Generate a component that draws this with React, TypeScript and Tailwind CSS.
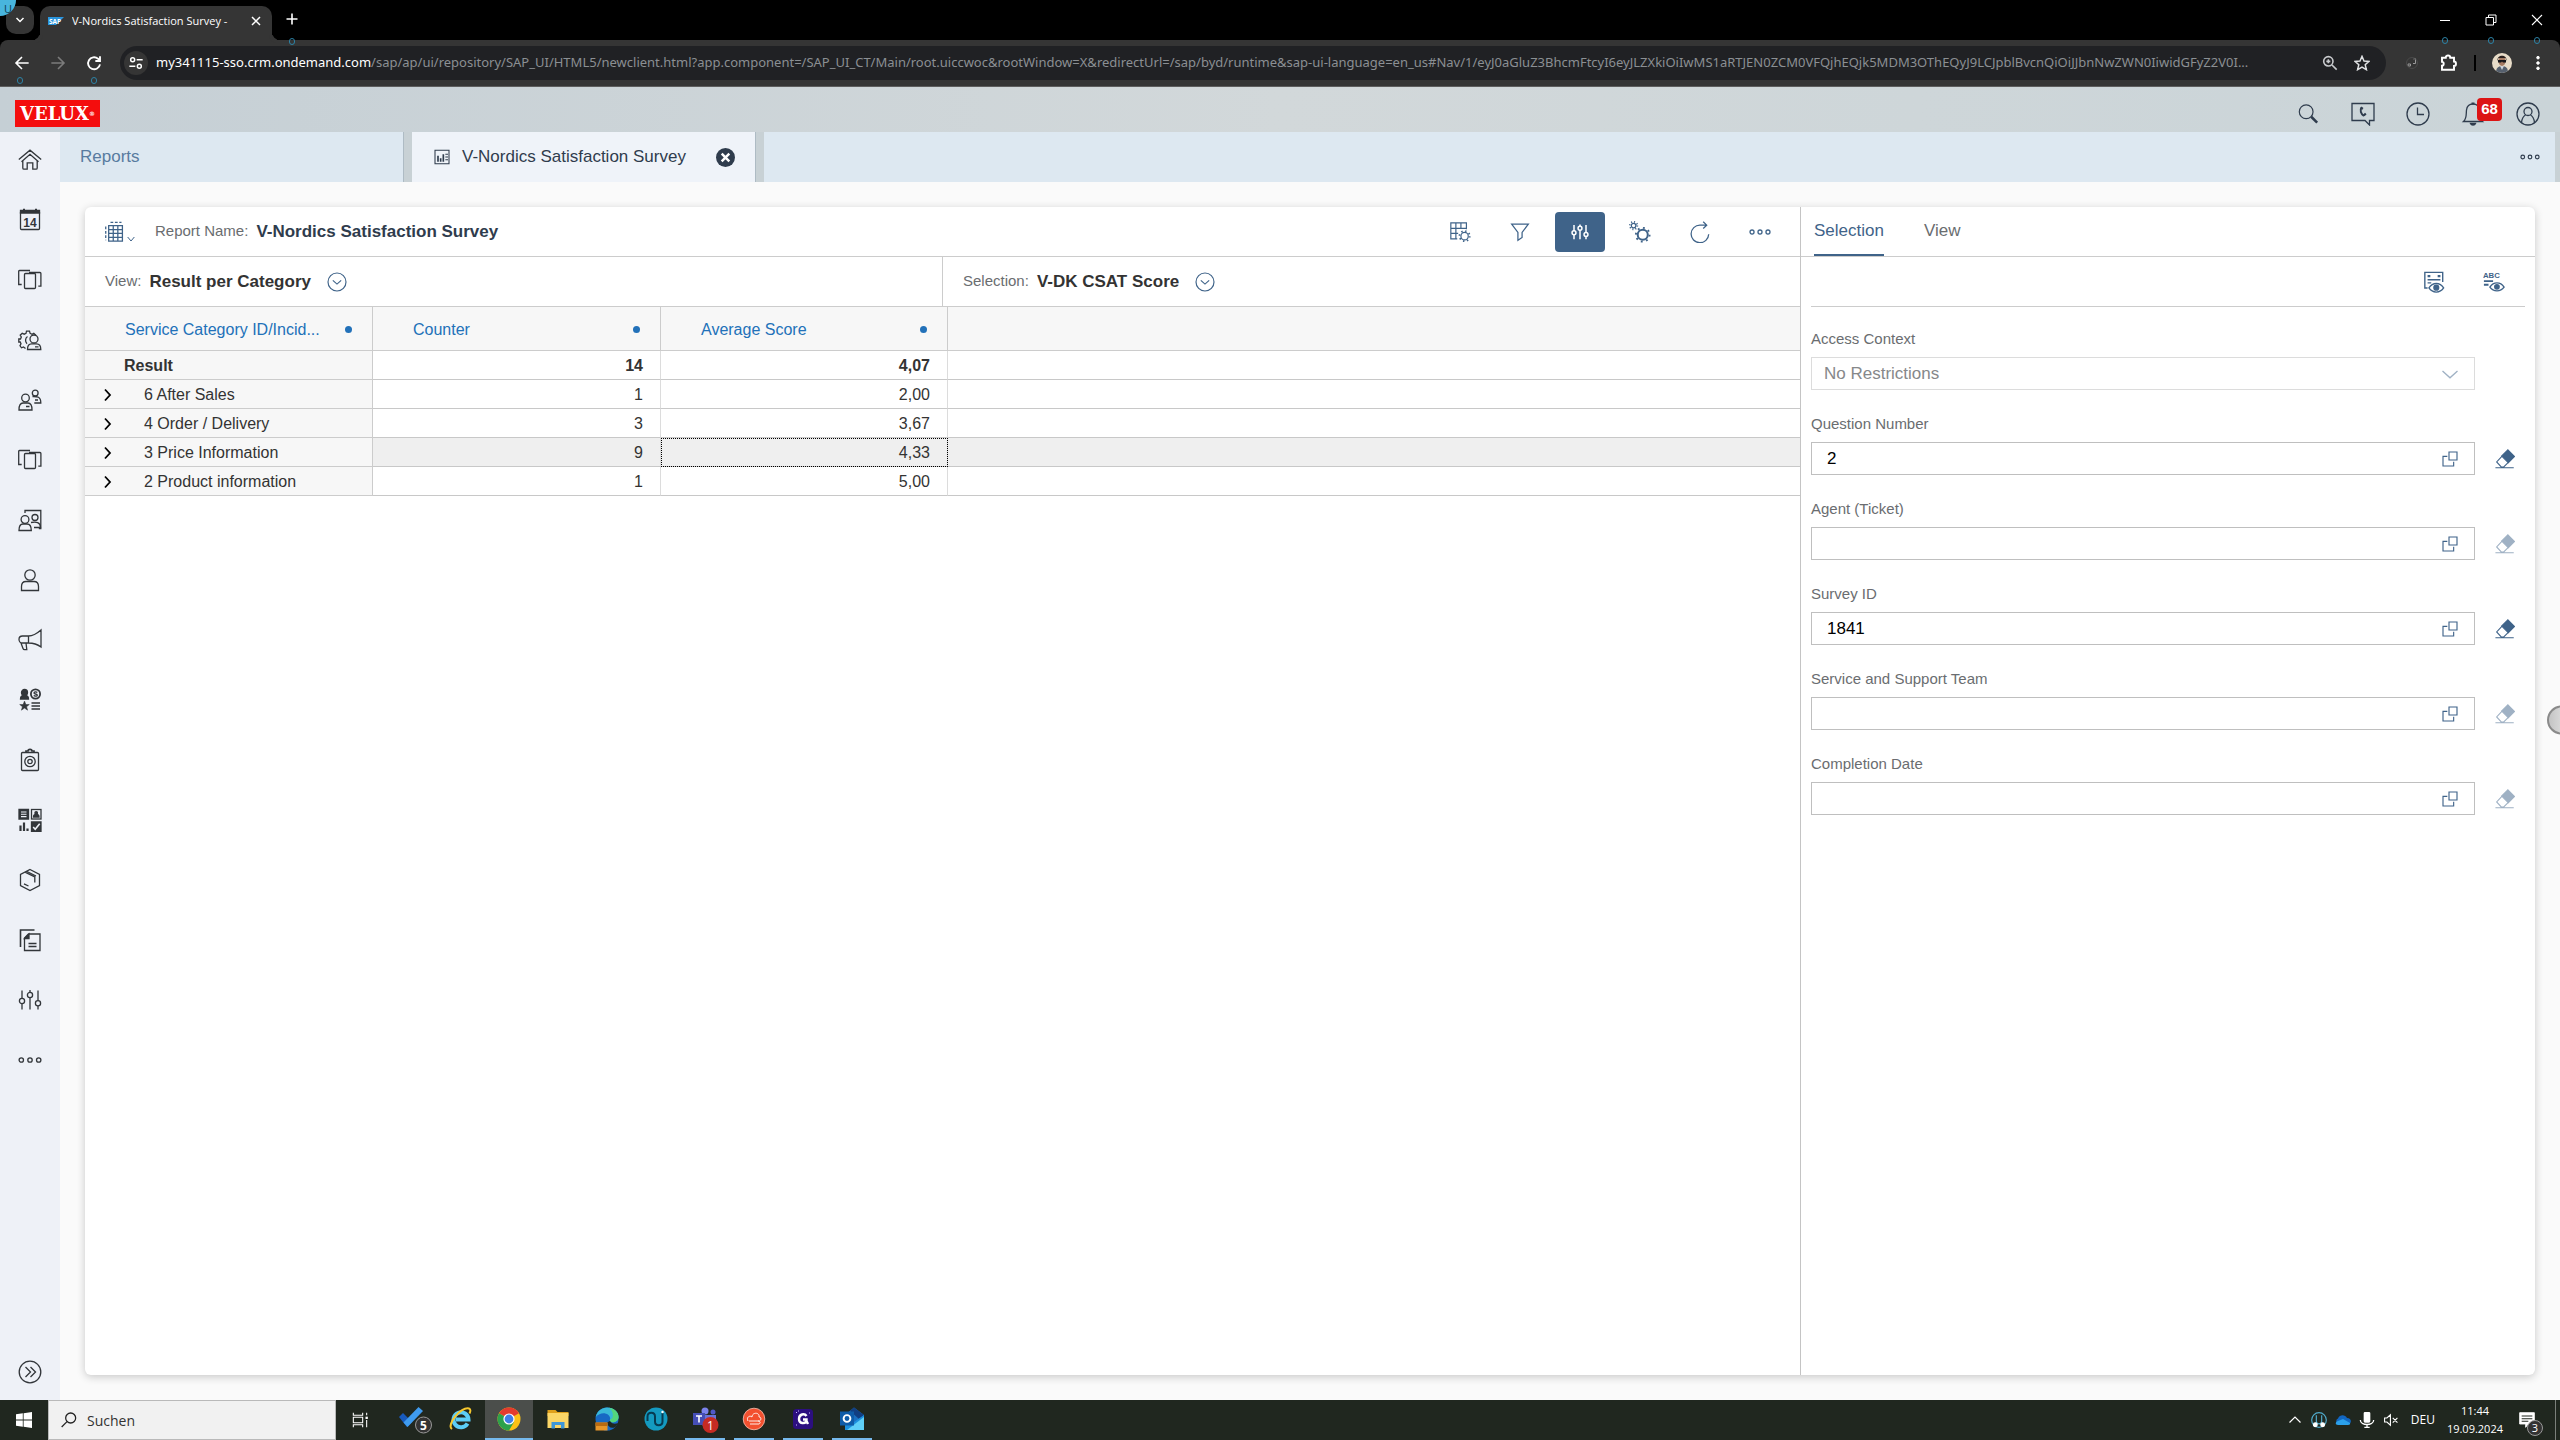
import { useState } from 'react';
import type { ReactNode } from 'react';

const URL_HOST = 'my341115-sso.crm.ondemand.com';
const URL_PATH =
  '/sap/ap/ui/repository/SAP_UI/HTML5/newclient.html?app.component=/SAP_UI_CT/Main/root.uiccwoc&rootWindow=X&redirectUrl=/sap/byd/runtime&sap-ui-language=en_us#Nav/1/eyJ0aGluZ3BhcmFtcyI6eyJLZXkiOiIwMS1aRTJEN0ZCM0VFQjhEQjk5MDM3OThEQyJ9LCJpblBvcnQiOiJJbnNwZWN0IiwidGFyZ2V0I...';

interface ReportRow {
  category: string;
  counter: string;
  score: string;
}

const rows: ReportRow[] = [
  { category: '6 After Sales', counter: '1', score: '2,00' },
  { category: '4 Order / Delivery', counter: '3', score: '3,67' },
  { category: '3 Price Information', counter: '9', score: '4,33' },
  { category: '2 Product information', counter: '1', score: '5,00' },
];

interface Field {
  id: string;
  label: string;
  value: string;
}

const initialFields: Field[] = [
  { id: 'question', label: 'Question Number', value: '2' },
  { id: 'agent', label: 'Agent (Ticket)', value: '' },
  { id: 'survey', label: 'Survey ID', value: '1841' },
  { id: 'team', label: 'Service and Support Team', value: '' },
  { id: 'completion', label: 'Completion Date', value: '' },
];

interface IconProps {
  children: ReactNode;
  className?: string;
  width?: number;
}

function Icon({ children, className = 'size-6', width = 1.3 }: IconProps) {
  return (
    <svg viewBox="0 0 24 24" className={className} fill="none" stroke="currentColor" strokeWidth={width} aria-hidden="true">
      {children}
    </svg>
  );
}

function Gear({ cx, cy, r, w = 1.3 }: { cx: number; cy: number; r: number; w?: number }) {
  // eight teeth drawn as a dashed ring around the hub
  const outer = r + w / 2 + 0.9;
  const step = (2 * Math.PI * outer) / 8;
  return (
    <g>
      <circle cx={cx} cy={cy} r={r} strokeWidth={w} />
      <circle cx={cx} cy={cy} r={outer} strokeWidth={2} strokeDasharray={`${step * 0.35} ${step * 0.65}`} />
    </g>
  );
}

const pagesIcon = (
  <>
    <rect x="6.5" y="5.5" width="11" height="15" rx="1" />
    <path d="M12 2.5H1.5c-.5 0-.8.3-.8.8v13.2h3M11 4.5h11c.6 0 .9.3.9.9v12.8h-2.6" />
  </>
);

const slidersIcon = (
  <>
    <path d="M4 2.5v8M4 15.5v6M12 2v2.500M12 9.500v12M20 2.500v10M20 18v3.500" />
    <circle cx="4" cy="13" r="2.6" />
    <circle cx="12" cy="7" r="2.6" />
    <circle cx="20" cy="15.2" r="2.6" />
  </>
);

const dotsIcon = (
  <>
    <circle cx="3.300" cy="12" r="2.200" />
    <circle cx="12" cy="12" r="2.200" />
    <circle cx="20.700" cy="12" r="2.200" />
  </>
);

const navItems: { label: string; icon: ReactNode }[] = [
  {
    label: 'Home',
    icon: <path d="M.8 11.500 12 2.200l11.200 9.300M3.500 13.800 12 6.300l8.500 7.500M4.800 12.800V20c0 .8.300 1.200 1.200 1.200h3.200v-6.400h5.600v6.400H18c.8 0 1.200-.4 1.200-1.200v-7.200" />,
  },
  {
    label: 'Calendar',
    icon: (
      <>
        <rect x="2.500" y="3" width="19" height="18.500" rx="1" />
        <path d="M2.500 2.500h19v2.500h-19z" fill="currentColor" />
        <path d="M6 .8v2.400M18 .8v2.400" strokeWidth="2" />
        <text x="12" y="18.500" textAnchor="middle" fontSize="12" fontWeight="bold" fill="currentColor" stroke="none">14</text>
      </>
    ),
  },
  { label: 'Pages', icon: pagesIcon },
  {
    label: 'Service agents',
    icon: (
      <>
        <path d="M7.500 20.500l-2-1.500-2 .8-1.500-2 1-2-.8-1.800H.8v-3h1.700l.8-2-1.100-1.800 2-2 2 1 1.800-.8.500-2.200h3l.6 2.200 1.900.9 1.800-1.100 2 2M9.500 8.500C7 10 7 14 9 15.800" />
        <circle cx="16" cy="11" r="4" />
        <path d="M9.500 21.500c0-4 1.500-5.700 4-5.700h5c2.700 0 4.300 1.800 4.300 5.700zM17 18.800h3.500" />
      </>
    ),
  },
  {
    label: 'Accounts',
    icon: (
      <>
        <circle cx="7.500" cy="10" r="3.800" />
        <path d="M1 22c0-4.700 1.200-7 4-7h5c2.800 0 4 2.300 4 7zM8 18.500h3.500" />
        <circle cx="17.200" cy="5" r="2.900" />
        <path d="M14.500 8.500c4 0 8.300-.5 8.300 6.500h-6.500M17 12h3" />
      </>
    ),
  },
  { label: 'Documents', icon: pagesIcon },
  {
    label: 'Contacts',
    icon: (
      <>
        <circle cx="7" cy="11.500" r="3.900" />
        <path d="M1 22.500c0-4.500 1.500-6.500 4-6.500h4c2.700 0 4.300 2 4.300 6.500zM7 5V2.500h15.800v18h-2" />
        <circle cx="17" cy="9.500" r="3" />
        <path d="M13 14.500c5-1 9.500-.5 9.500 5h-6.500" />
      </>
    ),
  },
  {
    label: 'People',
    icon: (
      <>
        <circle cx="12" cy="7" r="5.200" />
        <path d="M3.500 22.500v-4c0-3.500 1.500-5 4.500-5h8c3 0 4.500 1.500 4.500 5v4z" />
      </>
    ),
  },
  {
    label: 'Campaigns',
    icon: <path d="M23 2v17c-4-3-7.500-4-12.500-4H4.500C2.500 15 1 13.500 1 11.500S2.500 8 4.500 8h6C15.500 8 19 5.500 23 2zM10.500 8v7M3 15l2 5.500c.3.900.8 1.200 1.600 1.200h2.200L8 15" />,
  },
  {
    label: 'Sales',
    icon: (
      <>
        <circle cx="6.500" cy="4.500" r="3" fill="currentColor" />
        <path d="M2.500 11c0-2.500 1.500-3.500 4-3.500s4 1 4 3.500z" fill="currentColor" />
        <circle cx="17.500" cy="6" r="4.600" strokeWidth="1.800" />
        <path d="M19.300 4.500c-.8-.8-3.300-.8-3.300.4 0 1.400 3.300.8 3.300 2.300 0 1.200-2.600 1.200-3.600.3" />
        <path d="m6.500 13 1.400 3.500h3.400l-2.700 2.200 1 3.500-3.100-2.100-3.100 2.100 1-3.500-2.700-2.200h3.400z" fill="currentColor" strokeWidth=".5" />
        <path d="M13.500 15h8.500M13.500 18h8.500M13.500 21h8.500" strokeWidth="1.500" />
      </>
    ),
  },
  {
    label: 'Targets',
    icon: (
      <>
        <rect x="3.500" y="4.500" width="17" height="18" rx="1" />
        <path d="M8 4.500V3h2c0-2.200 4-2.200 4 0h2v1.500" strokeWidth="1.700" />
        <circle cx="12" cy="13.500" r="5.200" />
        <circle cx="12" cy="13.500" r="2.200" />
      </>
    ),
  },
  {
    label: 'Tasks',
    icon: (
      <>
        <path d="M1 1.500h9.500v9.500H1z" fill="currentColor" />
        <path d="M3 4h5.500M3 6.300h5.500M3 8.600h5.500" stroke="#eef1f7" strokeWidth="1.100" />
        <rect x="13.500" y="1.500" width="9.500" height="9.500" />
        <path d="M15.500 9c0-2 1-2.500 2.800-2.500S21 7 21 9z" fill="currentColor" />
        <circle cx="18.200" cy="5" r="1.300" fill="currentColor" />
        <path d="M2.500 23v-5.500M6 23v-8.500M9.500 23v-2.500" strokeWidth="2.200" />
        <path d="M13.500 14h9.500v9.500h-9.500z" fill="currentColor" />
        <path d="m15.200 19 2 2.200 4.500-5.500" stroke="#eef1f7" strokeWidth="1.600" />
      </>
    ),
  },
  {
    label: 'Products',
    icon: <path d="m12 1.500 9.500 4.800v11.400L12 22.500l-9.500-4.800V6.300zM7.500 4.300 16.800 9v5.500M6 15.800l4.500 2.200M9 3.500 18 8" />,
  },
  {
    label: 'Library',
    icon: (
      <>
        <path d="M2.500 19V2h14" strokeWidth="1.600" />
        <path d="M10.500 6h11.500v16.500H6.500V10z" />
        <path d="M6.500 10.500h4.500V6z" fill="currentColor" />
        <path d="M10.500 15.500h8M10.500 18.500h8" />
      </>
    ),
  },
  { label: 'Settings', icon: slidersIcon },
  { label: 'More', icon: dotsIcon },
];

function Hint({ className }: { className: string }) {
  return <span className={`absolute z-10 h-[7px] w-[6px] rounded-full border border-[#2d82a5] ${className}`} />;
}

function BrowserChrome() {
  return (
    <div className="relative bg-black font-['Open_Sans',sans-serif] text-white">
      <div className="absolute left-0 top-0 z-10 flex size-4 items-center justify-center rounded-br-full bg-[#48b5dd] text-[11px] leading-none text-[#0d3c52]">U</div>
      <div className="flex h-10 items-end">
        <button aria-label="Search tabs" className="mb-[6px] ml-[6px] flex h-7 w-7 items-center justify-center rounded-[10px] bg-[#353535]">
          <Icon className="size-3" width={3}><path d="m5 8 7 7 7-7" /></Icon>
        </button>
        <div className="relative ml-[6px] flex h-[34px] w-[232px] items-center rounded-t-[10px] bg-[#353535] pb-1 pl-2">
          <span className="absolute -left-2 bottom-0 size-2 rounded-br-lg shadow-[3px_3px_0_#353535]" />
          <span className="absolute -right-2 bottom-0 size-2 rounded-bl-lg shadow-[-3px_3px_0_#353535]" />
          <svg viewBox="0 0 16 8" className="h-2 w-4" aria-hidden="true">
            <path d="M0 0h16L8 8H0z" fill="#2a94dc" />
            <text x="1" y="6.500" fontSize="6.500" fontWeight="bold" fill="#fff">SAP</text>
          </svg>
          <span className="ml-2 flex-1 truncate text-[11px]">V-Nordics Satisfaction Survey -</span>
          <button aria-label="Close tab" className="mr-2 flex size-4 items-center justify-center">
            <Icon className="size-3" width={3}><path d="m4 4 16 16M20 4 4 20" /></Icon>
          </button>
        </div>
        <button aria-label="New tab" className="mb-[13px] ml-3 flex size-4 items-center justify-center">
          <Icon className="size-3" width={3.2}><path d="M12 1v22M1 12h22" /></Icon>
        </button>
        <div className="ml-auto flex h-10 items-center">
          <button aria-label="Minimize" className="flex w-[46px] justify-center">
            <Icon className="size-3" width={2}><path d="M2 13h20" /></Icon>
          </button>
          <button aria-label="Restore" className="flex w-[46px] justify-center">
            <Icon className="size-3" width={2}><path d="M2 7h15v15H2zM7 7V2h15v15h-5" /></Icon>
          </button>
          <button aria-label="Close window" className="flex w-[46px] justify-center">
            <Icon className="size-3" width={2.200}><path d="m2 2 20 20M22 2 2 22" /></Icon>
          </button>
        </div>
      </div>
      <div className="flex h-[47px] items-center rounded-t-lg border-b border-[#5d5d5d] bg-[#353535] px-1">
        <button aria-label="Back" className="flex w-9 justify-center">
          <Icon className="size-4" width={2.400}><path d="M22 12H4M12 3l-9 9 9 9" /></Icon>
        </button>
        <button aria-label="Forward" className="flex w-9 justify-center text-[#7b7b7b]">
          <Icon className="size-4" width={2.400}><path d="M2 12h18M12 3l9 9-9 9" /></Icon>
        </button>
        <button aria-label="Reload" className="flex w-9 justify-center">
          <Icon className="size-4" width={2.800}><path d="M21 14a9 9 0 1 1-3-8.500l2.500 2.500M21 2v7h-7" /></Icon>
        </button>
        <div className="ml-2 flex h-[34px] min-w-0 flex-1 items-center rounded-full bg-[#202124] pl-1 pr-2">
          <button aria-label="Site information" className="flex size-6 shrink-0 items-center justify-center rounded-full bg-[#353535]">
            <Icon className="size-4" width={2.200}>
              <circle cx="7" cy="7" r="3" />
              <path d="M13 7h9M2 17h9" />
              <circle cx="17" cy="17" r="3" />
            </Icon>
          </button>
          <span className="ml-2 min-w-0 flex-1 truncate font-['Noto_Sans',sans-serif] text-[13px] text-[#8b8f93]">
            <span className="text-white">{URL_HOST}</span>
            {URL_PATH}
          </span>
          <button aria-label="Zoom" className="flex w-8 shrink-0 justify-center text-[#c8cacd]">
            <Icon className="size-4" width={2.400}>
              <circle cx="9.500" cy="9.500" r="7" />
              <path d="m15 15 7 7M6.500 9.500h6M9.500 6.500v6" />
            </Icon>
          </button>
          <button aria-label="Bookmark" className="flex w-8 shrink-0 justify-center text-[#e0e2e4]">
            <Icon className="size-4" width={2.200}><path d="m12 2 3 7 7.500.6-5.700 5 1.800 7.400L12 18l-6.600 4 1.800-7.400-5.700-5L9 9z" /></Icon>
          </button>
        </div>
        <div className="ml-2 flex items-center">
          <button aria-label="Extension" className="flex w-9 justify-center text-[#9a9a9a]">
            <Icon className="size-3" width={2}><path d="M4 14h5v4H4zM14 13h5M15 4l4-1v10" /><circle cx="12" cy="12" r="11" stroke="#4a4a4a" /></Icon>
          </button>
          <button aria-label="Extensions" className="flex w-9 justify-center">
            <Icon className="size-[18px]" width={2.600}><path d="M4 5h5c0-4 6-4 6 0h5v5c3.500 0 3.500 6 0 6v5H4v-5.500c3 0 3-5 0-5z" /></Icon>
          </button>
          <span className="mx-2 h-4 w-0.5 bg-black" />
          <button aria-label="Profile" className="flex w-9 justify-center">
            <svg viewBox="0 0 20 20" className="size-5 rounded-full" aria-hidden="true">
              <path d="M0 0h20v20H0z" fill="#e8dcc8" />
              <path d="M4 20c0-5 2-7 6-7s6 2 6 7z" fill="#56606e" />
              <path d="m8 13 2 4 2-4z" fill="#cfd5dc" />
              <ellipse cx="10" cy="8" rx="3.500" ry="5" fill="#a57a61" />
              <path d="M5.500 8C4.500 1 15.500 1 14.500 8l-1-3h-7z" fill="#2b211d" />
              <path d="M6 7h8v2.500h-3l-1-1-1 1H6z" fill="#16161a" />
            </svg>
          </button>
          <button aria-label="Browser menu" className="flex w-9 justify-center">
            <Icon className="size-4"><g fill="currentColor"><circle cx="12" cy="4" r="2" /><circle cx="12" cy="12" r="2" /><circle cx="12" cy="20" r="2" /></g></Icon>
          </button>
        </div>
      </div>
      <Hint className="left-[289px] top-[38px]" />
      <Hint className="left-[17px] top-[77px]" />
      <Hint className="left-[91px] top-[77px]" />
      <Hint className="right-[112px] top-[37px]" />
      <Hint className="right-[66px] top-[37px]" />
      <Hint className="right-[20px] top-[37px]" />
    </div>
  );
}

function ShellHeader() {
  return (
    <header className="flex h-[45px] items-center bg-linear-to-r from-[#c5cfd5] via-[#d2d8da] to-[#cad4d8] pl-[15px] pr-3 text-[#2f3c4d]">
      <a href="#home" className="mt-2 flex h-[27px] w-[85px] items-center justify-center bg-[#f40d0d] font-['DejaVu_Serif',serif] text-[18px] font-bold leading-none text-white">
        VELUX<span className="text-[6px]">®</span>
      </a>
      <div className="ml-auto flex items-center gap-[15px] pt-2">
        <button aria-label="Search" className="flex w-10 justify-center">
          <Icon className="size-[22px]"><circle cx="10" cy="9.500" r="7.500" /><path d="m15.500 15 6.500 6.500" strokeWidth="2.800" /></Icon>
        </button>
        <button aria-label="Calls" className="flex w-10 justify-center">
          <Icon>
            <path d="M1 1.500h22v17h-4.500v4.500l-4.500-4.500H1z" />
            <path d="M10.500 5.500c-2 2.500-.5 6.500 2.500 8.500" strokeWidth="2" />
            <path d="m9.800 5.500 2 1.500M12.800 13.500l2-2" strokeWidth="2.200" />
          </Icon>
        </button>
        <button aria-label="Recent" className="flex w-10 justify-center">
          <Icon><circle cx="12" cy="12" r="11" /><path d="M11.500 5.500v7H18" /></Icon>
        </button>
        <button aria-label="Notifications" className="relative flex w-10 justify-center">
          <Icon>
            <path d="M2.500 19.500C6 16.500 5 12 5.500 8c.5-4 3-6 6.500-6s6 2 6.500 6c.5 4-.5 8.500 3 11.500z" />
            <path d="M9.500 21.500c.8 2 4.200 2 5 0z" fill="currentColor" />
            <path d="M10.500 1.500h3" strokeWidth="2" />
          </Icon>
          <span className="absolute -top-1 left-6 flex h-[23px] w-[25px] items-center justify-center rounded bg-[#dc1414] text-[15px] font-bold text-white">68</span>
        </button>
        <button aria-label="User" className="flex w-10 justify-center">
          <Icon>
            <circle cx="12" cy="12" r="11" />
            <circle cx="12" cy="9.500" r="4" />
            <path d="M5.500 20.500c.5-4 2-6.500 4-7.500M18.500 20.500c-.5-4-2-6.500-4-7.500" />
          </Icon>
        </button>
      </div>
    </header>
  );
}

function Sidebar() {
  return (
    <nav className="flex w-[60px] flex-col items-center gap-9 bg-[#eef1f7] py-4 text-[#32363a]">
      {navItems.map((item) => (
        <button key={item.label} aria-label={item.label}>
          <Icon>{item.icon}</Icon>
        </button>
      ))}
      <button aria-label="Expand" className="mt-auto">
        <Icon><circle cx="12" cy="12" r="10.800" /><path d="m7.500 7 5 5-5 5M12.500 7l5 5-5 5" /></Icon>
      </button>
    </nav>
  );
}

function TabBar() {
  return (
    <div className="flex h-[50px] gap-2 bg-[#c8d1d5] pr-[5px] text-[17px]">
      <a href="#reports" className="flex w-[344px] items-center border-r border-[#aebbc4] bg-[#dde8f1] pl-5 text-[#587ba0]">
        Reports
      </a>
      <div className="flex w-[344px] items-center border-r border-[#aebbc4] bg-[#eff3f9] px-5 text-[#2f3c4d]">
        <Icon className="ml-[2px] size-4" width={1.600}>
          <path d="M1.500 2h21v20h-21z" />
          <path d="M6 19v-9M10 19v-5M14 19V8" strokeWidth="2.500" />
          <path d="M17 8h4M17 12h4M17 16h4" />
        </Icon>
        <span className="ml-3">V-Nordics Satisfaction Survey</span>
        <button aria-label="Close V-Nordics Satisfaction Survey" className="ml-auto">
          <svg viewBox="0 0 20 20" className="size-[19px]" aria-hidden="true">
            <circle cx="10" cy="10" r="10" fill="#2f3c4d" />
            <path d="m6 6 8 8M14 6l-8 8" stroke="#fff" strokeWidth="2.600" />
          </svg>
        </button>
      </div>
      <div className="flex flex-1 items-center justify-end bg-[#dde8f1] pr-[15px] text-[#2f3c4d]">
        <button aria-label="More tabs">
          <Icon className="size-5" width={1.400}>{dotsIcon}</Icon>
        </button>
      </div>
    </div>
  );
}

function CircleDown() {
  return (
    <Icon className="size-5" width={1.400}><circle cx="12" cy="12" r="10.800" /><path d="m7 10 5 4.500 5-4.500" /></Icon>
  );
}

function ReportToolbar() {
  return (
    <div className="flex h-[50px] items-center border-b border-[#cccccc] pl-5 pr-[15px] text-[#3f6389]">
      <button aria-label="Table layout" className="flex items-end">
        <Icon className="size-[22px]" width={1.400}>
          <path d="M4 5h15v17H4zM4 9.300h15M4 13.500h15M4 17.800h15M9 5v17M14 5v17" />
          <path d="M6 1.500h12M.8 6v15" strokeDasharray="3 1.800" />
        </Icon>
        <Icon className="size-2" width={3}><path d="m2 6 10 12L22 6" /></Icon>
      </button>
      <span className="ml-5 text-[15px] text-[#6a6d70]">Report Name:</span>
      <h1 className="ml-2 text-[17px] font-bold text-[#2f3c4d]">V-Nordics Satisfaction Survey</h1>
      <div className="ml-auto flex gap-[10px]">
        <button aria-label="Table settings" className="flex h-10 w-[50px] items-center justify-center">
          <Icon className="size-[22px]">
            <path d="M19 9V2H2v17.500h7M2 8h17M2 13.500h8M7.500 2v17.500M13 2v6" />
            <Gear cx={17} cy={16.500} r={4} />
          </Icon>
        </button>
        <button aria-label="Filter" className="flex h-10 w-[50px] items-center justify-center">
          <Icon className="size-5" width={1.500}><path d="M2 2.500h20l-7.500 10v6L9.500 22v-9.500z" /></Icon>
        </button>
        <button aria-label="Selection settings" className="flex h-10 w-[50px] items-center justify-center rounded bg-[#3f6389] text-white">
          <Icon className="size-[18px]" width={2}>{slidersIcon}</Icon>
        </button>
        <button aria-label="Process settings" className="flex h-10 w-[50px] items-center justify-center">
          <Icon className="size-[22px]">
            <Gear cx={5} cy={5} r={2.500} />
            <Gear cx={15} cy={15} r={5.500} w={2.200} />
          </Icon>
        </button>
        <button aria-label="Refresh" className="flex h-10 w-[50px] items-center justify-center">
          <Icon className="size-[22px]" width={1.400}><path d="M21.500 14.500A9.600 9.600 0 1 1 12 4.500h7M15.500.800 19.300 4.500l-3.800 3.700" /></Icon>
        </button>
        <button aria-label="More actions" className="flex h-10 w-[50px] items-center justify-center">
          <Icon className="size-[22px]" width={1.400}>{dotsIcon}</Icon>
        </button>
      </div>
    </div>
  );
}

function ColumnHeader({ title }: { title: string }) {
  return (
    <th className="border-b border-r border-[#cccccc] bg-[#f7f7f7] pl-10 pr-5 pt-0.5 font-normal">
      <div className="flex items-center justify-between">
        <span className="whitespace-nowrap">{title}</span>
        <span className="size-[7px] rounded-full bg-[#2271b9]" />
      </div>
    </th>
  );
}

function ReportTable() {
  const cell = 'border-b border-r border-b-[#c8c8c8] border-r-[#dcdcdc] pr-[17px] pt-0.5 text-right';
  return (
    <table className="w-full table-fixed border-separate border-spacing-0 text-[16px] text-[#333333]">
      <colgroup>
        <col className="w-[288px]" />
        <col className="w-[288px]" />
        <col className="w-[287px]" />
        <col />
      </colgroup>
      <thead>
        <tr className="h-11 text-left text-[#2271b9]">
          <ColumnHeader title="Service Category ID/Incid..." />
          <ColumnHeader title="Counter" />
          <ColumnHeader title="Average Score" />
          <th className="border-b border-[#cccccc] bg-[#f7f7f7]" />
        </tr>
      </thead>
      <tbody>
        <tr className="h-[29px] font-bold">
          <td className="border-b border-r border-[#cccccc] bg-[#f7f7f7] pl-[39px] pt-0.5">Result</td>
          <td className={cell}>14</td>
          <td className={cell}>4,07</td>
          <td className="border-b border-[#c8c8c8]" />
        </tr>
        {rows.map((row) => {
          const active = row.category === '3 Price Information';
          return (
            <tr key={row.category} className={active ? 'h-[29px] bg-[#efefef]' : 'h-[29px]'}>
              <td className="border-b border-r border-[#cccccc] bg-[#f7f7f7] pl-[17px] pt-0.5">
                <div className="flex items-center">
                  <button aria-label={`Expand ${row.category}`} className="text-black">
                    <Icon className="h-[14px] w-[12px]" width={3.600}><path d="m6 1 10 11L6 23" /></Icon>
                  </button>
                  <span className="ml-[30px]">{row.category}</span>
                </div>
              </td>
              <td className={cell}>{row.counter}</td>
              <td className={active ? `${cell} outline-1 -outline-offset-1 outline-dotted outline-black` : cell}>{row.score}</td>
              <td className="border-b border-[#c8c8c8]" />
            </tr>
          );
        })}
      </tbody>
    </table>
  );
}

function SelectionPanel() {
  const [fields, setFields] = useState(initialFields);

  const update = (id: string, value: string) => {
    setFields(fields.map((f) => (f.id === id ? { ...f, value } : f)));
  };

  return (
    <aside className="w-[30%] border-l border-[#c4c4c4]">
      <div className="flex h-[50px] gap-10 border-b border-[#cccccc] px-[13px] text-[17px]">
        <button className="border-b-2 border-[#3f6389] text-[#3f6389]">Selection</button>
        <button className="border-b-2 border-transparent text-[#6a6d70]">View</button>
      </div>
      <div className="px-[10px]">
        <div className="flex h-[50px] items-center justify-end gap-[38px] border-b border-[#cccccc] pr-5 text-[#3f6389]">
          <button aria-label="Show fields">
            <Icon className="size-[22px]" width={1.500}>
              <path d="M5 18.500H2V1.500h19.500V12M5 9.500h14M5 13h4" />
              <path d="M5 5.500h3M16 5.500h3" strokeWidth="2.400" />
              <path d="M6.500 18.500c4-6.500 12-6.500 16 0-4 6-12 6-16 0z" />
              <circle cx="14.500" cy="18.200" r="2.600" fill="currentColor" />
            </Icon>
          </button>
          <button aria-label="Show texts">
            <Icon className="size-[22px]" width={1.500}>
              <text x="0" y="7.500" fontSize="8.500" fontWeight="bold" fill="currentColor" stroke="none">ABC</text>
              <path d="M1 11h10M1 15h5" strokeWidth="2" />
              <path d="M7.500 17.500c4-6 11.500-6 15.500 0-4 5.500-11.500 5.500-15.500 0z" />
              <circle cx="15.200" cy="17.300" r="2.400" fill="currentColor" />
            </Icon>
          </button>
        </div>
        <div className="flex flex-col gap-6 pt-[22px]">
          <div>
            <label htmlFor="context" className="block text-[15px] leading-5 text-[#6a6d70]">Access Context</label>
            <div className="relative mr-[50px] mt-2">
              <select id="context" disabled className="block h-[33px] w-full appearance-none border border-[#dcdcdc] bg-white px-3 text-[17px] text-[#86888a] opacity-100">
                <option>No Restrictions</option>
              </select>
              <Icon className="pointer-events-none absolute right-4 top-2 size-[18px] text-[#9fb1c4]" width={1.800}><path d="m2 8 10 9L22 8" /></Icon>
            </div>
          </div>
          {fields.map((field) => (
            <div key={field.id}>
              <label htmlFor={field.id} className="block text-[15px] leading-5 text-[#6a6d70]">{field.label}</label>
              <div className="mt-2 flex items-center">
                <div className="flex h-[33px] flex-1 items-center border border-[#bfbfbf] bg-white pr-4">
                  <input id={field.id} value={field.value} onChange={(e) => update(field.id, e.target.value)} className="h-full min-w-0 flex-1 px-[15px] text-[17px] text-black outline-none" />
                  <button aria-label={`Choose ${field.label}`} className="text-[#3f6389]">
                    <Icon className="size-4" width={1.700}>
                      <path d="M10.500 1.500h12v12h-12z" />
                      <path d="M8 8H1.500v14.500h16V16" />
                    </Icon>
                  </button>
                </div>
                <button
                  aria-label={`Clear ${field.label}`}
                  disabled={!field.value}
                  onClick={() => update(field.id, '')}
                  className="ml-5 mr-[10px] text-[#3f6389] disabled:text-[#9fb1c4]"
                >
                  <Icon className="size-5" width={1.300}>
                    <path d="M15.500 1 23.500 9l-7.500 7.500L8 8.500z" fill="currentColor" />
                    <path d="m8.500 8.500-6.500 7 5.500 6h3l5.500-5.500M.5 22.500h22" />
                  </Icon>
                </button>
              </div>
            </div>
          ))}
        </div>
      </div>
    </aside>
  );
}

const taskApps: { label: string; state: string; icon: ReactNode }[] = [
  {
    label: 'To Do',
    state: 'w-12 border-transparent',
    icon: (
      <>
        <path d="m0 10 4-4 9 9-5 5z" fill="#185abd" />
        <path d="M8.500 20 24 4l-4.500-4L4.500 15.500z" fill="#3f9bee" />
        <circle cx="24.500" cy="18" r="8" fill="#333" stroke="#999" />
        <text x="24.500" y="22.500" textAnchor="middle" fontSize="12" fontWeight="bold" fill="#fff">5</text>
      </>
    ),
  },
  {
    label: 'Internet Explorer',
    state: 'w-12 border-transparent',
    icon: (
      <>
        <path d="M19.500 16.500A7.500 7.500 0 1 1 20.500 12.500H8" fill="none" stroke="#5ccdf6" strokeWidth="4" />
        <path d="M4 22C-2 18 13-1 21 1.500c2 .8 1.500 3 .5 5" fill="none" stroke="#f6c72d" strokeWidth="2" />
      </>
    ),
  },
  {
    label: 'Chrome',
    state: 'w-12 bg-[#4b4e4b] border-[#76b9ed]',
    icon: (
      <>
        <circle cx="12" cy="12" r="11.500" fill="#fbc116" />
        <path d="M12 12 2.040 6.250A11.500 11.500 0 0 1 21.960 6.250z" fill="#e33b2e" />
        <path d="M12 12 2.040 6.250A11.500 11.500 0 0 0 12 23.500l5-8.500z" fill="#2ca14c" />
        <circle cx="12" cy="12" r="5.600" fill="#fff" />
        <circle cx="12" cy="12" r="4.400" fill="#3f7ee8" />
      </>
    ),
  },
  {
    label: 'Explorer',
    state: 'w-12 border-transparent',
    icon: (
      <>
        <path d="M1.500 3h8l2 2h11v4h-21z" fill="#dfa01c" />
        <path d="M1.500 6h21v15h-21z" fill="#fbd667" />
        <path d="M5.500 21.500V15h13v6.500H15V18H9v3.500z" fill="#3e97d8" />
      </>
    ),
  },
  {
    label: 'Edge',
    state: 'w-12 border-transparent',
    icon: (
      <>
        <circle cx="12" cy="12" r="11.500" fill="#1769c4" />
        <path d="M.800 10C2 4 7 .500 12 .500 19 .500 24 5 23.500 10.500c-.3 4-4.500 5.500-7.500 4.500-2-.8-1-2 -.8-3.500C15 6 6 3.500.8 10z" fill="#39b8d8" />
        <path d="M14 .700c6 1 10 5.300 9.500 9.800-.3 4-4.500 5.500-7.500 4.500-1.500-.6-1-1.600-.8-2.500C19 12 19 4 14 .700z" fill="#54d67c" />
        <path d="M15 14c2 3.500 6 3 8 2-1 2-2 3.500-3.500 4.500-4 1-7-1-7.500-5z" fill="#20271f" />
        <path d="M.5 15.500h12v8H.5z" fill="#e8962a" />
        <path d="M.5 15.500h12v3.500H.5z" fill="#b86a12" />
      </>
    ),
  },
  {
    label: 'Userlane',
    state: 'w-12 border-transparent',
    icon: (
      <>
        <circle cx="12" cy="12" r="11.500" fill="#149ac0" />
        <path d="M3.500 14V9.500c0-5 7.500-5 7.500 0v5c0 5 7.500 5 7.500 0V6" fill="none" stroke="#073b52" strokeWidth="2" />
        <circle cx="18.500" cy="5" r="1.200" fill="#fff" />
      </>
    ),
  },
  {
    label: 'Teams',
    state: 'mx-1 w-10 border-[#76b9ed]',
    icon: (
      <>
        <circle cx="12" cy="4" r="3.500" fill="#7b83eb" />
        <circle cx="20" cy="5" r="2.500" fill="#5059c9" />
        <path d="M8 8h15v8c0 5-12 8-14 1z" fill="#6a72d8" />
        <path d="M0 6h12v12H0z" fill="#454eb5" />
        <path d="M3 9h6M6 9v6.500" stroke="#fff" strokeWidth="1.600" />
        <circle cx="17.500" cy="18" r="8" fill="#c62b23" />
        <text x="17.500" y="22.500" textAnchor="middle" fontSize="12" fill="#fff">1</text>
      </>
    ),
  },
  {
    label: 'Postman',
    state: 'mx-1 w-10 border-[#76b9ed]',
    icon: (
      <>
        <circle cx="12" cy="12" r="10.800" fill="#f3502f" stroke="#f7c3b4" strokeWidth=".8" />
        <path d="M6 14c-2-4 2-6 4-4 0-5 8-5 7 0 3 0 2 4 0 4H7M8 17h9c2-1 1-3-1-3" fill="none" stroke="#fff" strokeWidth=".9" />
      </>
    ),
  },
  {
    label: 'Qlik',
    state: 'mx-1 w-10 border-[#76b9ed]',
    icon: (
      <>
        <rect x="2" y="2" width="20" height="20" rx="3.500" fill="#2c0f80" />
        <path d="M15.500 9c-2-3-7.500-2-7.500 3s6 5 7.500 2v-1.500h-3.500M15 13l2 4" fill="none" stroke="#fff" strokeWidth="2.400" />
        <path d="M5 5.500h1M18 6h1M5 18h1M7 4h1" stroke="#c9b8ff" />
      </>
    ),
  },
  {
    label: 'Outlook',
    state: 'mx-1 w-10 border-[#76b9ed]',
    icon: (
      <>
        <path d="M5 8 14 .500 24 8v7H5z" fill="#1b6fc0" />
        <path d="m10 4 4-3.500L24 8l-5 4z" fill="#123f82" />
        <path d="M5 13l9 2 10-7v15H5z" fill="#1b8fdd" />
        <path d="M7 23 24 10v13z" fill="#5fd0f8" />
        <path d="M0 4.500h14v14H0z" fill="#0f5ca8" />
        <circle cx="7" cy="11.500" r="3.400" fill="none" stroke="#fff" strokeWidth="1.900" />
      </>
    ),
  },
];

function Taskbar() {
  return (
    <footer className="flex h-10 items-stretch bg-[#20271f] font-['Open_Sans',sans-serif] text-white">
      <button aria-label="Start" className="flex w-12 items-center justify-center">
        <svg viewBox="0 0 16 16" className="size-4" fill="#fff" aria-hidden="true">
          <path d="M0 2.300 6.800 1.300v6.300H0zM7.600 1.200 16 0v7.600H7.600zM0 8.400h6.800v6.300L0 13.700zM7.600 8.400H16V16l-8.400-1.200z" />
        </svg>
      </button>
      <label className="flex w-[288px] items-center border border-[#b9b9b9] bg-[#f1f1f1] pl-3 text-[#222222]">
        <Icon className="size-4" width={1.900}><circle cx="14.500" cy="9" r="7.500" /><path d="m9 14.500-8 8" /></Icon>
        <input aria-label="Suchen" placeholder="Suchen" className="ml-[10px] min-w-0 flex-1 text-[14px] outline-none placeholder:text-[#333333]" />
      </label>
      <button aria-label="Task view" className="flex w-12 items-center justify-center">
        <Icon className="size-4" width={1.600}><path d="M2 1v4h14V1M2 23v-4h14v4M2 8h14v8H2zM22 1v4M22 12v11" /><path d="M22 7v3.500" strokeWidth="3.500" /></Icon>
      </button>
      <div className="ml-[3px] flex gap-px">
        {taskApps.map((app) => (
          <button key={app.label} aria-label={app.label} className={`flex items-center justify-center border-b-2 ${app.state}`}>
            <svg viewBox="0 0 24 24" className="size-6 overflow-visible" aria-hidden="true">{app.icon}</svg>
          </button>
        ))}
      </div>
      <div className="ml-auto flex items-center text-[11px]">
        <button aria-label="Hidden icons" className="flex w-6 justify-center">
          <Icon className="size-3" width={2.400}><path d="M1 17 12 6l11 11" /></Icon>
        </button>
        <button aria-label="Headset" className="flex w-6 justify-center">
          <Icon className="size-4" width={1.800}>
            <circle cx="12" cy="12" r="11" stroke="#4fa9c9" />
            <path d="M8 5v9c0 5 8 5 8 0V5" stroke="#4fa9c9" />
            <circle cx="6.500" cy="19" r="2.800" fill="#fff" />
            <circle cx="17.500" cy="19" r="2.800" fill="#fff" />
          </Icon>
        </button>
        <button aria-label="OneDrive" className="flex w-6 justify-center">
          <svg viewBox="0 0 16 10" className="h-[10px] w-4" aria-hidden="true">
            <path d="M3 9a3 3 0 0 1 0-5.500C4.500-.5 10-1 12 3c5 0 5 6 1 6z" fill="#1267c2" />
            <path d="M3 10c-3 0-3-3 0-4l5-2 7 4c.5 1-.5 2-2 2z" fill="#2ba0ea" />
          </svg>
        </button>
        <button aria-label="Microphone" className="flex w-6 justify-center">
          <Icon className="size-4" width={2}><rect x="8" y="1" width="8" height="14" rx="1" fill="currentColor" /><path d="M2 12c0 9 20 9 20 0M12 19v4M8 23h8" /></Icon>
        </button>
        <button aria-label="Muted" className="flex w-6 justify-center">
          <Icon className="size-[14px]" width={1.900}><path d="M1 8.500h4L11 3v18l-6-5.500H1zM15 8.500l8 8M23 8.500l-8 8" /></Icon>
        </button>
        <span className="ml-2 text-[12px]">DEU</span>
        <div className="ml-3 text-center leading-[18px]">
          <div>11:44</div>
          <div>19.09.2024</div>
        </div>
        <button aria-label="Notifications" className="relative ml-4 mr-5">
          <Icon className="size-4"><path d="M1 1h22v17h-9l-4 5v-5H1z" fill="currentColor" /><path d="M4 6h16M4 10h16M4 14h10" stroke="#20271f" strokeWidth="1.600" /></Icon>
          <span className="absolute left-2 top-2 flex size-4 items-center justify-center rounded-full border border-[#999999] bg-[#333333] text-[11px]">3</span>
        </button>
        <span className="mr-1 h-10 w-px bg-[#7b7f7a]" />
      </div>
    </footer>
  );
}

export default function App() {
  return (
    <div className="relative flex min-h-screen flex-col overflow-hidden bg-[#fafafa] font-['Liberation_Sans',Arial,sans-serif]">
      <BrowserChrome />
      <ShellHeader />
      <div className="flex flex-1">
        <Sidebar />
        <div className="flex min-w-0 flex-1 flex-col">
          <TabBar />
          <main className="flex flex-1 p-[25px]">
            <div className="flex flex-1 rounded-md bg-white shadow-[0_2px_8px_rgba(0,0,0,0.2)]">
              <section className="min-w-0 flex-1">
                <ReportToolbar />
                <div className="flex h-[50px] border-b border-[#cccccc]">
                  <div className="flex flex-1 items-center border-r border-[#cccccc] pl-5">
                    <span className="text-[15px] text-[#6a6d70]">View:</span>
                    <span className="ml-2 text-[17px] font-bold text-[#333333]">Result per Category</span>
                    <button aria-label="Choose view" className="ml-4 text-[#3f6389]"><CircleDown /></button>
                  </div>
                  <div className="flex flex-1 items-center pl-5">
                    <span className="text-[15px] text-[#6a6d70]">Selection:</span>
                    <span className="ml-2 text-[17px] font-bold text-[#333333]">V-DK CSAT Score</span>
                    <button aria-label="Choose selection" className="ml-4 text-[#3f6389]"><CircleDown /></button>
                  </div>
                </div>
                <ReportTable />
              </section>
              <SelectionPanel />
            </div>
          </main>
        </div>
      </div>
      <Taskbar />
      <button aria-label="Open side pane" className="absolute -right-4 top-1/2 size-[29px] -translate-y-1/2 rounded-full border-2 border-[#8a8a8a] bg-linear-to-r from-[#c4c4c4] to-[#eeeeee]" />
    </div>
  );
}
